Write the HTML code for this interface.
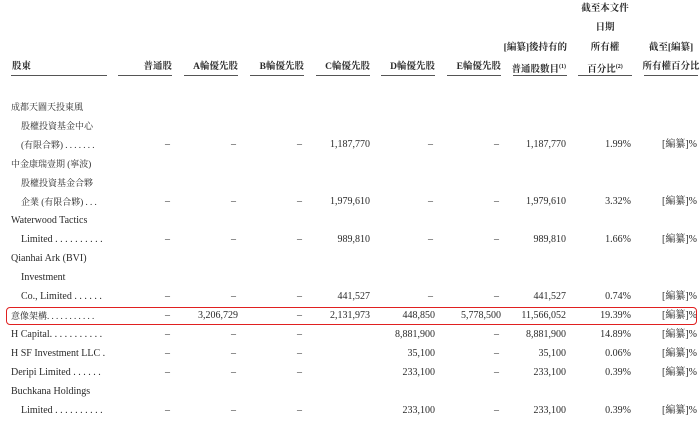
<!DOCTYPE html>
<html><head><meta charset="utf-8"><style>
body{margin:0;width:700px;height:421px;background:#fff;position:relative;overflow:hidden;font-family:"Liberation Serif","Noto Serif CJK SC",serif;color:#2a2a2a;font-size:10px}
.t{position:absolute;white-space:nowrap;line-height:14px}
.r{position:absolute;white-space:nowrap;line-height:14px;text-align:right}
.c{font-size:9px}
.h{font-weight:bold;font-family:"Liberation Serif","Noto Serif CJK SC",serif;font-size:9.5px}
.u{position:absolute;top:75px;height:1px;background:#555}
sup{font-size:6px}
.box{position:absolute;left:6px;top:307px;width:689px;height:16px;border:1.5px solid #e02020;border-radius:4px}
</style></head><body>
<div class="t h" style="left:12px;top:60px">股東</div>
<div class="r h" style="right:528px;top:60px">普通股</div>
<div class="r h" style="right:462px;top:60px">A輪優先股</div>
<div class="r h" style="right:396px;top:60px">B輪優先股</div>
<div class="r h" style="right:330px;top:60px">C輪優先股</div>
<div class="r h" style="right:265px;top:60px">D輪優先股</div>
<div class="r h" style="right:199px;top:60px">E輪優先股</div>
<div class="r h" style="right:133px;top:41px">[編纂]後持有的</div>
<div class="r h" style="right:134px;top:60px">普通股數目<sup>(1)</sup></div>
<div class="t h" style="left:578px;width:54px;text-align:center;top:2px">截至本文件</div>
<div class="t h" style="left:578px;width:54px;text-align:center;top:21px">日期</div>
<div class="t h" style="left:578px;width:54px;text-align:center;top:41px">所有權</div>
<div class="t h" style="left:578px;width:54px;text-align:center;top:60px">百分比<sup>(2)</sup></div>
<div class="t h" style="left:644px;width:54px;text-align:center;top:41px">截至[編纂]</div>
<div class="t h" style="left:642px;width:58px;text-align:center;top:60px">所有權百分比</div>
<div class="u" style="left:11px;width:96px"></div>
<div class="u" style="left:118px;width:54px"></div>
<div class="u" style="left:184px;width:54px"></div>
<div class="u" style="left:250px;width:54px"></div>
<div class="u" style="left:316px;width:54px"></div>
<div class="u" style="left:381px;width:54px"></div>
<div class="u" style="left:447px;width:54px"></div>
<div class="u" style="left:513px;width:54px"></div>
<div class="u" style="left:578px;width:54px"></div>
<div class="u" style="left:644px;width:54px"></div>

<div class="t c" style="left:11px;top:100px">成都天圖天投東風</div>
<div class="t c" style="left:21px;top:119px">股權投資基金中心</div>
<div class="t c" style="left:21px;top:138px">(有限合夥) . . . . . . .</div>
<div class="t c" style="left:11px;top:157px">中金康瑞壹期 (寧波)</div>
<div class="t c" style="left:21px;top:176px">股權投資基金合夥</div>
<div class="t c" style="left:21px;top:195px">企業 (有限合夥) . . .</div>
<div class="t" style="left:11px;top:214px">Waterwood Tactics</div>
<div class="t" style="left:21px;top:233px">Limited . . . . . . . . . .</div>
<div class="t" style="left:11px;top:252px">Qianhai Ark (BVI)</div>
<div class="t" style="left:21px;top:271px">Investment</div>
<div class="t" style="left:21px;top:290px">Co., Limited . . . . . .</div>
<div class="t c" style="left:11px;top:309px">意像架構. . . . . . . . . . .</div>
<div class="t" style="left:11px;top:328px">H Capital. . . . . . . . . . .</div>
<div class="t" style="left:11px;top:347px">H SF Investment LLC .</div>
<div class="t" style="left:11px;top:366px">Deripi Limited . . . . . .</div>
<div class="t" style="left:11px;top:385px">Buchkana Holdings</div>
<div class="t" style="left:21px;top:404px">Limited . . . . . . . . . .</div>

<div style="position:absolute;left:0;top:138px;width:700px">
<span class="r" style="right:530px">–</span><span class="r" style="right:464px">–</span><span class="r" style="right:398px">–</span><span class="r" style="right:330px">1,187,770</span><span class="r" style="right:267px">–</span><span class="r" style="right:201px">–</span><span class="r" style="right:134px">1,187,770</span><span class="r" style="right:69px">1.99%</span><span class="r" style="right:3px">[編纂]%</span></div>
<div style="position:absolute;left:0;top:195px;width:700px">
<span class="r" style="right:530px">–</span><span class="r" style="right:464px">–</span><span class="r" style="right:398px">–</span><span class="r" style="right:330px">1,979,610</span><span class="r" style="right:267px">–</span><span class="r" style="right:201px">–</span><span class="r" style="right:134px">1,979,610</span><span class="r" style="right:69px">3.32%</span><span class="r" style="right:3px">[編纂]%</span></div>
<div style="position:absolute;left:0;top:233px;width:700px">
<span class="r" style="right:530px">–</span><span class="r" style="right:464px">–</span><span class="r" style="right:398px">–</span><span class="r" style="right:330px">989,810</span><span class="r" style="right:267px">–</span><span class="r" style="right:201px">–</span><span class="r" style="right:134px">989,810</span><span class="r" style="right:69px">1.66%</span><span class="r" style="right:3px">[編纂]%</span></div>
<div style="position:absolute;left:0;top:290px;width:700px">
<span class="r" style="right:530px">–</span><span class="r" style="right:464px">–</span><span class="r" style="right:398px">–</span><span class="r" style="right:330px">441,527</span><span class="r" style="right:267px">–</span><span class="r" style="right:201px">–</span><span class="r" style="right:134px">441,527</span><span class="r" style="right:69px">0.74%</span><span class="r" style="right:3px">[編纂]%</span></div>
<div style="position:absolute;left:0;top:309px;width:700px">
<span class="r" style="right:530px">–</span><span class="r" style="right:462px">3,206,729</span><span class="r" style="right:398px">–</span><span class="r" style="right:330px">2,131,973</span><span class="r" style="right:265px">448,850</span><span class="r" style="right:199px">5,778,500</span><span class="r" style="right:134px">11,566,052</span><span class="r" style="right:69px">19.39%</span><span class="r" style="right:3px">[編纂]%</span></div>
<div style="position:absolute;left:0;top:328px;width:700px">
<span class="r" style="right:530px">–</span><span class="r" style="right:464px">–</span><span class="r" style="right:398px">–</span><span class="r" style="right:265px">8,881,900</span><span class="r" style="right:201px">–</span><span class="r" style="right:134px">8,881,900</span><span class="r" style="right:69px">14.89%</span><span class="r" style="right:3px">[編纂]%</span></div>
<div style="position:absolute;left:0;top:347px;width:700px">
<span class="r" style="right:530px">–</span><span class="r" style="right:464px">–</span><span class="r" style="right:398px">–</span><span class="r" style="right:265px">35,100</span><span class="r" style="right:201px">–</span><span class="r" style="right:134px">35,100</span><span class="r" style="right:69px">0.06%</span><span class="r" style="right:3px">[編纂]%</span></div>
<div style="position:absolute;left:0;top:366px;width:700px">
<span class="r" style="right:530px">–</span><span class="r" style="right:464px">–</span><span class="r" style="right:398px">–</span><span class="r" style="right:265px">233,100</span><span class="r" style="right:201px">–</span><span class="r" style="right:134px">233,100</span><span class="r" style="right:69px">0.39%</span><span class="r" style="right:3px">[編纂]%</span></div>
<div style="position:absolute;left:0;top:404px;width:700px">
<span class="r" style="right:530px">–</span><span class="r" style="right:464px">–</span><span class="r" style="right:398px">–</span><span class="r" style="right:265px">233,100</span><span class="r" style="right:201px">–</span><span class="r" style="right:134px">233,100</span><span class="r" style="right:69px">0.39%</span><span class="r" style="right:3px">[編纂]%</span></div>
<div class="box"></div>
</body></html>
